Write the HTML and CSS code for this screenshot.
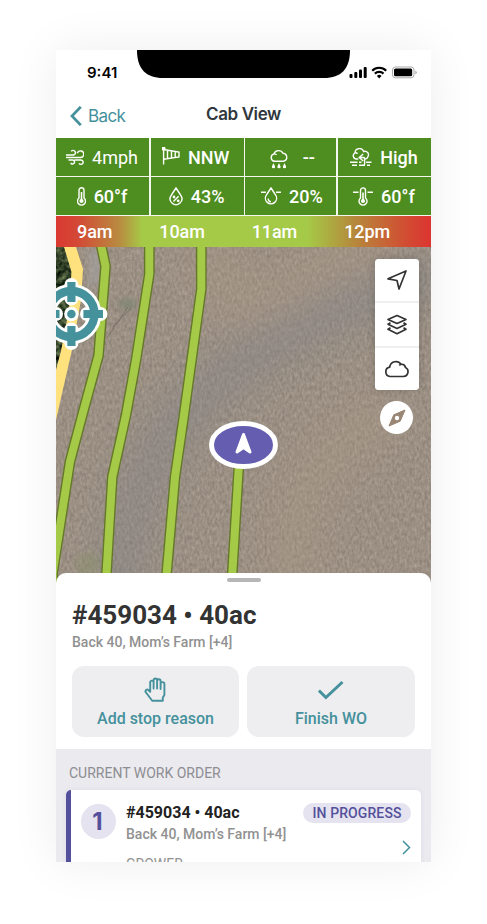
FILE: index.html
```html
<!DOCTYPE html>
<html lang="en">
<head>
<meta charset="utf-8">
<title>Cab View</title>
<link rel="stylesheet" href="styles.css">
</head>
<body>
<main class="phone">
  <div class="status">
    <span class="clock">9:41</span>
    <svg class="notch" width="213" height="28" viewBox="0 0 213 28"><path d="M0 0H213C213 19 204 28 187 28H26C9 28 0 19 0 0Z"/></svg>
    <svg class="signals" width="68" height="13" viewBox="0 0 68 13">
      <rect x="-.5" y="8" width="3" height="4" rx="1"/><rect x="4.300" y="6" width="3" height="6" rx="1"/><rect x="9" y="3.500" width="3" height="8.500" rx="1"/><rect x="13.700" y="1" width="3" height="11" rx="1"/>
      <g fill="none" stroke="#000" stroke-width="2.200"><path d="M22.200 4.700a9.800 9.800 0 0 1 14 0"/><path d="M24.900 7.600a6.100 6.100 0 0 1 8.600 0"/></g><path d="M26.900 9.900a3.400 3.400 0 0 1 4.600 0L29.200 12.400Z"/>
      <rect x="42.500" y="1" width="21.500" height="10.800" rx="3" fill="none" stroke="#aaa"/><rect x="44" y="2.500" width="18.200" height="7.800" rx="1.600"/><path d="M65.300 4.600v3.800q1.500-.8 1.500-1.900T65.300 4.600Z" fill="#aaa"/>
    </svg>
  </div>
  <header class="nav">
    <a class="back"><svg width="12" height="20" viewBox="0 0 12 20"><path d="M10.800 .8 2 10l8.800 9.200"/></svg><span>Back</span></a>
    <h1>Cab View</h1>
  </header>

  <section class="weather">
    <div class="cell light"><svg width="18" height="17" viewBox="0 0 18 17"><path d="M0 6H7.200a2.300 2.300 0 1 0-2-3.600M0 8.500H14.500a3.300 3.300 0 1 0-3.200-4.200M2.500 11H6.500a2 2 0 1 1-1.800 2.900M8.500 11H15a2.200 2.200 0 1 1-2 3.300"/></svg><span>4mph</span></div>
    <div class="cell sock"><svg width="18" height="18" viewBox="0 0 18 18"><path d="M1.600 1.800V17.500M1.600 2.500 17 5V10L1.600 12.200M5.500 3.200V11.700M9.500 3.800V11.200M13.200 4.500V10.700"/><circle cx="1.600" cy="1.600" r="1.300" fill="#fff"/></svg><span>NNW</span></div>
    <div class="cell rain"><svg width="18" height="20" viewBox="0 0 18 20"><path d="M4.500 12.300a3.800 3.800 0 0 1-.6-7.400A5 5 0 0 1 13 4.200a4.100 4.100 0 0 1 .5 8.100ZM3.900 4.900a4 4 0 0 1 2.700.8"/><path class="fill" d="M3.500 14.300q-3.300 5 0 5t0-5M9 14.300q-3.300 5 0 5t0-5M14.500 14.300q-3.300 5 0 5t0-5"/></svg><span>--</span></div>
    <div class="cell"><svg width="22" height="19" viewBox="0 0 22 19"><path d="M8.300 11H6.500A3.300 3.300 0 0 1 5 4.800 4.500 4.500 0 0 1 13.700 3.500 3.500 3.500 0 0 1 18 8.500q-.6 2.300-3 2.500M5 4.800a3.500 3.500 0 0 1 2.600.8M13.200 6 9.200 9.500l4 3.500M9.200 9.500h4.200q1.200 0 1.200 1.200v6M0 14.200H7.500M9 14.200h2.500M16 14.200h5.500M2 17.300h5M9 17.300h6M17 17.300h3"/></svg><span>High</span></div>
    <div class="cell"><svg width="9" height="19" viewBox="0 0 9 19"><path d="M2 11V3.200a2.500 2.500 0 0 1 5 0V11a4 4 0 1 1-5 0Z"/><path d="M4.500 5v8" stroke-width="1.600"/><circle class="fill" cx="4.500" cy="14" r="2.100"/></svg><span>60°f</span></div>
    <div class="cell"><svg width="14" height="19" viewBox="0 0 14 19"><path d="M7 1Q4 5.500 1.900 8.800A5.900 5.900 0 1 0 12.100 8.800Q10 5.500 7 1ZM9.600 9.300 4.500 14.500"/><circle cx="5" cy="10" r=".7"/><circle cx="9.200" cy="13.800" r=".7"/></svg><span>43%</span></div>
    <div class="cell shift"><svg width="20" height="19" viewBox="0 0 20 19"><path d="M10 1Q7.300 5 5.500 7.900A5.600 5.600 0 1 0 14.500 7.900Q12.700 5 10 1ZM0 5.200H5M15 5.200H20M7.200 11.500a3 3 0 0 0 2.800 3.200"/></svg><span>20%</span></div>
    <div class="cell"><svg width="20" height="19" viewBox="0 0 20 19"><path d="M7.500 11V3.400a2.500 2.500 0 0 1 5 0V11a4 4 0 1 1-5 0ZM0 5.200H5.500M14.500 5.200H20"/><path d="M10 5.500v8" stroke-width="1.600"/><circle class="fill" cx="10" cy="14" r="2.100"/></svg><span>60°f</span></div>
  </section>
  <div class="hours"><span>9am</span><span>10am</span><span>11am</span><span>12pm</span></div>

  <section class="map">
    <svg class="field" width="375" height="340" viewBox="56 247 375 340">
      <defs>
        <filter id="soil" x="0" y="0" width="100%" height="100%" color-interpolation-filters="sRGB"><feTurbulence type="fractalNoise" baseFrequency=".4 .22" numOctaves="3" seed="8"/><feColorMatrix values=".17 .07 0 0 .488  .17 .07 0 0 .443  .16 .07 0 0 .4  0 0 0 0 1"/></filter>
        <filter id="leaves" x="0" y="0" width="100%" height="100%" color-interpolation-filters="sRGB"><feTurbulence type="fractalNoise" baseFrequency=".16" numOctaves="3" seed="4"/><feColorMatrix values=".8 0 0 0 -.2  .8 0 0 0 -.14  .6 0 0 0 -.14  0 0 0 0 1"/><feComposite in2="SourceGraphic" operator="in"/></filter>
        <filter id="soft" x="-50%" y="-50%" width="200%" height="200%"><feGaussianBlur stdDeviation="17"/></filter>
        <filter id="haze" x="-50%" y="-50%" width="200%" height="200%"><feGaussianBlur stdDeviation="3"/></filter>
      </defs>
      <rect x="56" y="247" width="375" height="340" filter="url(#soil)"/>
      <g filter="url(#soft)" fill="none">
        <path d="M120 600Q125 460 215 385T440 275" stroke="#7d8088" stroke-width="46" opacity=".4"/>
        <path d="M215 240Q220 330 285 290T400 240M300 590Q270 480 390 410" stroke="#b09a85" stroke-width="50" opacity=".3"/>
      </g>
      <g filter="url(#haze)"><ellipse cx="127" cy="304" rx="9" ry="6" fill="#7d8672" opacity=".8"/><path d="M88 250h14v30l-14 10Z" fill="#a3a1a1" opacity=".6"/><ellipse cx="88" cy="565" rx="12" ry="13" fill="#869063" opacity=".35"/></g>
      <g fill="none" stroke="#b8aa9e" stroke-width="1" opacity=".3"><path d="M105 271Q160 243 178 290T145 347Q122 361 103 354M110 264Q170 232 185 290T130 361"/></g>
      <path d="M128 307 107 338M131 308 113 327" fill="none" stroke="#5e5651" opacity=".45"/>
      <path d="M56 247h9l7 23-3 40-8 42-5 18Z" fill="#333" filter="url(#leaves)"/>
      <path d="M64 247H76L83 269 81 300 71.700 351 56 420V370L61 351 69 310 71.500 272Z" fill="#ffe27d"/>
      <g class="route-edge"><path d="M101.500 240V247L105.500 266 98.500 355.500 82.300 415 70 461.500 52.700 573V590"/><path d="M149.300 240V274L136 360 126 415 112.300 477 106.500 573V590"/><path d="M201.300 240V289L184 415 175 477 166.700 573V590"/><path d="M239.500 455 232.300 573V590"/></g>
      <g class="route"><path d="M101.500 240V247L105.500 266 98.500 355.500 82.300 415 70 461.500 52.700 573V590"/><path d="M149.300 240V274L136 360 126 415 112.300 477 106.500 573V590"/><path d="M201.300 240V289L184 415 175 477 166.700 573V590"/><path d="M239.500 455 232.300 573V590"/></g>
      <g fill="none" stroke="#fff">
        <circle cx="71.400" cy="314" r="23" stroke-width="14"/>
        <path d="M71.400 285V298.500M71.400 329.500V343M42 314H56M87 314H100.500" stroke-width="14" class="tick-halo"/>
        <circle cx="71.400" cy="314" r="4" fill="#fff" stroke-width="6.500"/>
      </g>
      <g fill="none" stroke="#45919c"><circle cx="71.400" cy="314" r="23" stroke-width="8.400"/><path d="M71.400 282V302M71.400 326V346M40 314H59.500M83.400 314H103" stroke-width="8.200"/></g>
      <circle cx="71.400" cy="314" r="4.300" fill="#45919c"/>
      <ellipse cx="243.500" cy="445" rx="32" ry="21.500" fill="#655eb0" stroke="#fff" stroke-width="5"/>
      <path d="M243.500 434.500 250 452 243.500 447.500 237 452Z" fill="#fff" stroke="#fff" stroke-width="3" stroke-linejoin="round"/>
    </svg>
    <div class="tools">
      <div class="toolbar">
        <button><svg width="22" height="22" viewBox="0 0 22 22"><path d="M20 2 13 20 11 11.500 2 9.800Z"/></svg></button>
        <button><svg width="22" height="22" viewBox="0 0 22 22"><path d="M11 1.500 20 5.500 11 9.500 2 5.500ZM4.500 8.800 2 10.200 11 14.500 20 10.200 17.500 8.800M4.500 13.700 2 15.200 11 19.700 20 15.200 17.500 13.700"/></svg></button>
        <button><svg width="26" height="20" viewBox="0 0 26 20"><path d="M6 17.500H19.500A4.800 4.800 0 0 0 21.500 8.500Q20.800 4.800 17 5.300A6.200 6.200 0 0 0 5.700 8.200 4.700 4.700 0 0 0 6 17.500ZM17 5.300Q15.800 5.700 15.300 6.500"/></svg></button>
      </div>
      <div class="compass"><svg width="18" height="18" viewBox="0 0 18 18"><path d="M17 1 12.200 12.200 1 17 5.800 5.800Z" fill="#998675" stroke="#998675" stroke-linejoin="round"/><circle cx="9" cy="9" r="2.200" fill="#fff"/></svg></div>
    </div>
  </section>

  <section class="sheet">
    <div class="grip"></div>
    <h2>#459034 • 40ac</h2>
    <p class="place">Back 40, Mom’s Farm [+4]</p>
    <div class="actions">
      <button><svg width="23" height="26" viewBox="0 0 23 26"><path d="M6.200 14.800V5.300a1.700 1.700 0 0 1 3.400 0V11.500 3.200a1.700 1.700 0 0 1 3.500 0V11.500 4a1.700 1.700 0 0 1 3.500 0V12 7a1.600 1.600 0 0 1 3.800 0V18L18.800 20.500V23.800H8.200L2 15.500a1.700 1.700 0 0 1 2.300-2.500Z"/></svg><span>Add stop reason</span></button>
      <button><svg width="26" height="26" viewBox="0 0 26 26"><path class="tick" d="M.9 13.500 7.900 20.500 24.500 5"/></svg><span>Finish WO</span></button>
    </div>
  </section>
  <section class="orders">
    <h3>CURRENT WORK ORDER</h3>
    <article class="card">
      <div class="number">1</div>
      <div class="info"><h4>#459034 • 40ac</h4><p>Back 40, Mom’s Farm [+4]</p><small>GROWER</small></div>
      <div class="state"><span class="pill">IN PROGRESS</span><svg width="9" height="15" viewBox="0 0 9 15"><path d="M1 1 7.500 7.500 1 14"/></svg></div>
    </article>
  </section>
</main>
</body>
</html>
```
FILE: styles.css
```css
* { box-sizing: border-box; }
body { margin: 0; background: #fff; font-family: Roboto, sans-serif; color: #333; }
h1, h2, h3, h4, p { margin: 0; }
button { border: 0; padding: 0; font: inherit; }
svg { display: block; flex: none; }
.phone { width: 375px; height: 812px; margin: 50px 56px; overflow: hidden; display: flex; flex-direction: column; background: #fff; box-shadow: 0 0 45px rgba(0,0,0,.075); }
.status { height: 44px; flex: none; display: flex; align-items: flex-start; }
.clock { width: 81px; padding: 14px 0 0 31px; font: 600 15px/18px Inter, sans-serif; color: #000; white-space: nowrap; }
.signals { margin: 16px 0 0; overflow: visible; }
.nav { height: 44px; flex: none; display: grid; grid-template-columns: 1fr auto 1fr; align-items: center; padding: 0 14px; }
.nav h1 { font: 600 17px/22px Inter, sans-serif; letter-spacing: -.4px; color: #30373c; margin-top: -4px; }
.back { display: flex; align-items: center; gap: 6px; font: 400 17px/22px Inter, sans-serif; letter-spacing: -.6px; color: #45919c; }
.back svg { fill: none; stroke: #45919c; stroke-width: 2.7; margin-top: -1px; }
.weather { flex: none; display: grid; grid-template-columns: 93px 93px 91px 93px; grid-template-rows: 38px 38px; column-gap: 1.67px; row-gap: 1px; padding-bottom: 1px; background: #f4f7ef; }
.cell { display: flex; align-items: center; justify-content: center; gap: 8px; padding-right: 1px; background: #4e8d1f; color: #fff; font-size: 18px; font-weight: 500; }
.cell svg { fill: none; stroke: #fff; stroke-width: 1.4; margin-top: 1px; }
.cell svg .fill { fill: #fff; stroke: none; }
.light { font-weight: 400; }
.sock { padding-right: 3px; }
.sock svg { margin-top: -2px; }
.shift { padding: 0 0 0 2px; }
.rain { gap: 15px; padding: 0 0 0 3px; }
.rain svg { margin-top: 3px; }
.hours { height: 31px; flex: none; display: flex; justify-content: space-between; align-items: center; padding: 0 41px 0 21px; font-size: 18px; font-weight: 500; letter-spacing: -.1px; color: #fff; background: linear-gradient(90deg,#da3831 0,#d34a35 6%,#b88c40 17%,#a5ca47 23%,#a5ca47 67%,#b58b3c 79%,#d34a32 94%,#dc3430 100%); }
.map { height: 326px; flex: none; display: grid; align-items: start; }
.map > * { grid-area: 1 / 1; }
.field { pointer-events: none; }
.route-edge, .route { fill: none; stroke-linejoin: miter; }
.route-edge { stroke: #65772b; stroke-width: 10.8; }
.route { stroke: #a5ca47; stroke-width: 8; }
.tick-halo { stroke-linejoin: round; stroke-linecap: round; }
.tools { z-index: 1; justify-self: end; width: 44px; margin: 12px 12px 0 0; display: flex; flex-direction: column; align-items: center; gap: 11px; }
.toolbar { width: 44px; height: 131px; border-radius: 4px; overflow: hidden; background: #efefef; display: grid; grid-template-rows: 42px 43px 42px; gap: 2px; box-shadow: 0 0 8px rgba(0,0,0,.18); }
.toolbar button { background: #fff; display: grid; place-items: center; }
.toolbar svg { fill: none; stroke: #333; stroke-width: 1.7; stroke-linejoin: round; }
.compass { width: 33px; height: 33px; margin-right: 1px; border-radius: 50%; background: #fff; display: grid; place-items: center; }
.sheet { z-index: 1; height: 176px; flex: none; border-radius: 10px 10px 0 0; background: #fff; padding: 5px 16px 0; }
.grip { width: 34px; height: 4px; margin: 0 auto; border-radius: 2px; background: #b6b6b6; }
.sheet h2 { margin-top: 17px; font-size: 26px; line-height: 32px; font-weight: 700; color: #333; white-space: nowrap; }
.place { margin-top: 3px; font-size: 14px; line-height: 17px; font-weight: 500; color: #919191; }
.actions { margin-top: 15px; display: grid; grid-template-columns: 167px 168px; gap: 8px; }
.actions button { height: 71px; border-radius: 12px; background: #eeeef0; color: #45919c; display: flex; flex-direction: column; align-items: center; padding-top: 11px; gap: 6px; font-size: 16px; line-height: 20px; font-weight: 500; }
.actions svg { fill: none; stroke: #45919c; stroke-width: 1.9; stroke-linejoin: round; }
.actions .tick { stroke-width: 3; stroke-linejoin: miter; }
.orders { flex: 1; min-height: 0; overflow: hidden; padding: 16px 10px 0; background: #ebeaef; }
.orders h3 { font-size: 14px; line-height: 17px; font-weight: 400; color: #8d8d92; margin: 0 0 8px 3px; }
.card { height: 100px; display: flex; border-left: 5px solid #54509c; border-radius: 5px; background: #fff; padding: 13px 10px 0; box-shadow: 0 0 5px rgba(80,80,110,.08); }
.number { width: 35px; height: 35px; flex: none; margin-top: 1px; border-radius: 50%; background: #e4e3ef; display: grid; place-items: center; padding-right: 2px; font: 700 24px/35px Inter, sans-serif; color: #54509c; }
.info { margin-left: 10px; white-space: nowrap; }
.info h4 { font-size: 16px; line-height: 19px; font-weight: 700; color: #222; }
.info p { margin-top: 4px; font-size: 14px; line-height: 17px; font-weight: 500; color: #919191; }
.info small { display: block; margin-top: 13px; font-size: 14px; line-height: 17px; color: #919191; }
.state { flex: none; margin-left: auto; display: flex; flex-direction: column; align-items: flex-end; gap: 17px; }
.pill { width: 108px; height: 20px; border-radius: 10px; background: #e4e3ef; color: #54509c; font-size: 14px; line-height: 20px; font-weight: 500; letter-spacing: .1px; text-align: center; }
.state svg { fill: none; stroke: #45919c; stroke-width: 1.5; }
```
